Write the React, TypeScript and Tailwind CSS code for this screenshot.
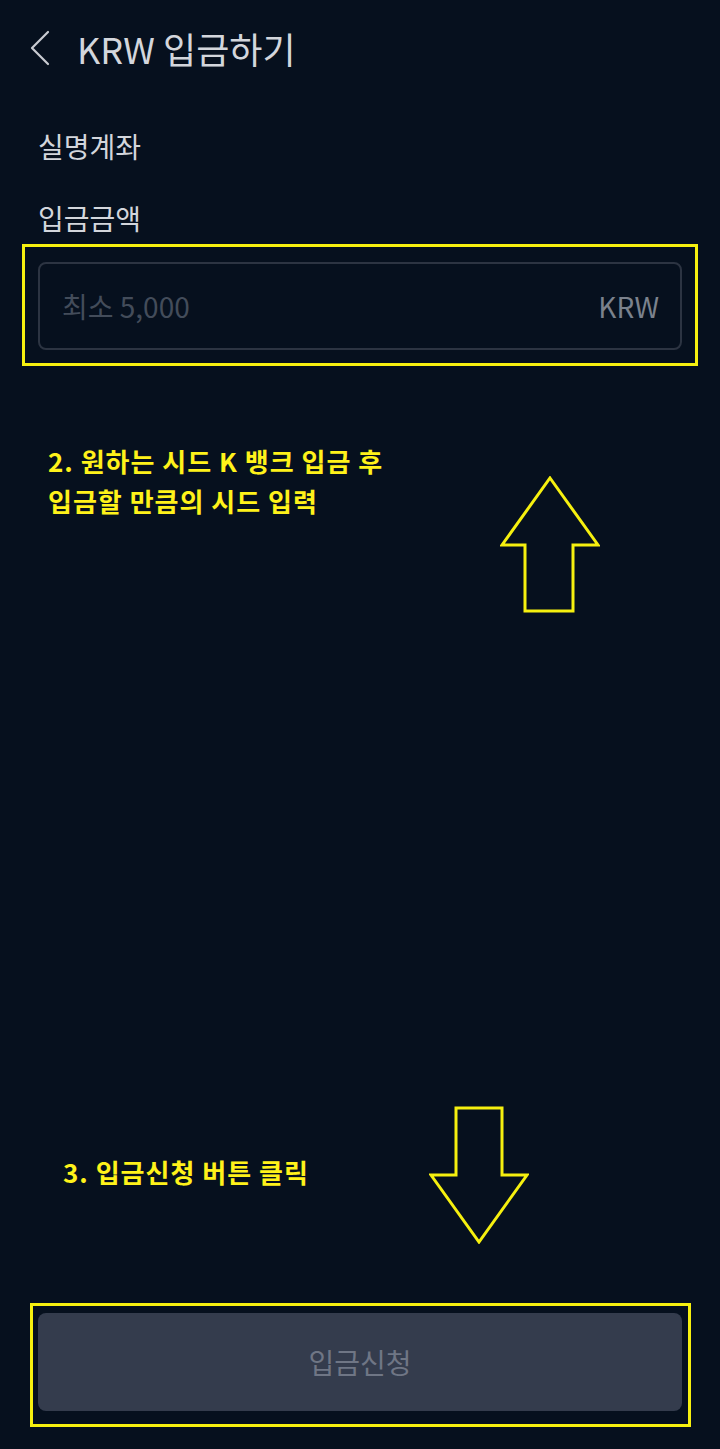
import React from "react";

const FONT = { fontFamily: '"Noto Sans CJK KR", "Noto Sans", sans-serif' };

export default function App() {
  return (
    <div
      className="w-[720px] h-[1449px] bg-[#06101e] flex flex-col overflow-hidden"
      style={FONT}
    >
      {/* Header */}
      <div className="h-[96px] flex items-center pl-[30px] shrink-0">
        <svg width="20" height="36" viewBox="0 0 20 36" fill="none">
          <path d="M18 2 L2 18 L18 34" stroke="#c9ccd2" strokeWidth="2.2" strokeLinecap="round" strokeLinejoin="round" />
        </svg>
        <span className="ml-[27px] text-[36px] leading-[48px] text-[#d3d6dc]">KRW 입금하기</span>
      </div>

      <div className="mt-[30px] pl-[38px] text-[28px] leading-[40px] text-[#d3d6dc]">실명계좌</div>
      <div className="mt-[32px] pl-[38px] text-[28px] leading-[40px] text-[#d3d6dc]">입금금액</div>

      {/* Amount input (annotated) */}
      <div className="mt-[6px] mx-[22px] border-[3px] border-[#f6f00f] pt-[15px] pb-[13px] px-[13px]">
        <div className="h-[88px] rounded-[8px] border-2 border-[#2c3442] flex items-center justify-between pl-[22px] pr-[21px]">
          <span className="text-[28px] text-[#434c5a]">최소 5,000</span>
          <span className="text-[28px] text-[#7b828d]">KRW</span>
        </div>
      </div>

      {/* Annotation 2 */}
      <div className="mt-[75px] flex items-start">
        <div className="pl-[48px] text-[26px] leading-[40px] tracking-[1px] font-bold text-[#fff21a] w-[500px]">
          <div>2. 원하는 시드 K 뱅크 입금 후</div>
          <div>입금할 만큼의 시드 입력</div>
        </div>
        <svg className="mt-[35px]" width="100" height="138" viewBox="0 0 100 138" fill="none">
          <path d="M50 2 L98 69 L73 69 L73 135 L25 135 L25 69 L2 69 Z" stroke="#f6f00f" strokeWidth="3" strokeLinejoin="miter" />
        </svg>
      </div>

      {/* Bottom section */}
      <div className="mt-auto flex items-start">
        <div className="pl-[63px] mt-[46px] text-[26px] leading-[40px] tracking-[1px] font-bold text-[#fff21a] w-[429px]">
          3. 입금신청 버튼 클릭
        </div>
        <svg width="100" height="138" viewBox="0 0 100 138" fill="none">
          <path d="M27 2 L73 2 L73 69 L98 69 L50 136 L2 69 L27 69 Z" stroke="#f6f00f" strokeWidth="3" strokeLinejoin="miter" />
        </svg>
      </div>

      <div className="mt-[59px] mb-[22px] ml-[30px] w-[661px] border-[3px] border-[#f6f00f] pt-[7px] pb-[13px] pl-[5px] pr-[6px]">
        <div className="h-[98px] rounded-[8px] bg-[#343c4d] flex items-center justify-center">
          <span className="text-[28px] text-[#6f7685]">입금신청</span>
        </div>
      </div>
    </div>
  );
}
